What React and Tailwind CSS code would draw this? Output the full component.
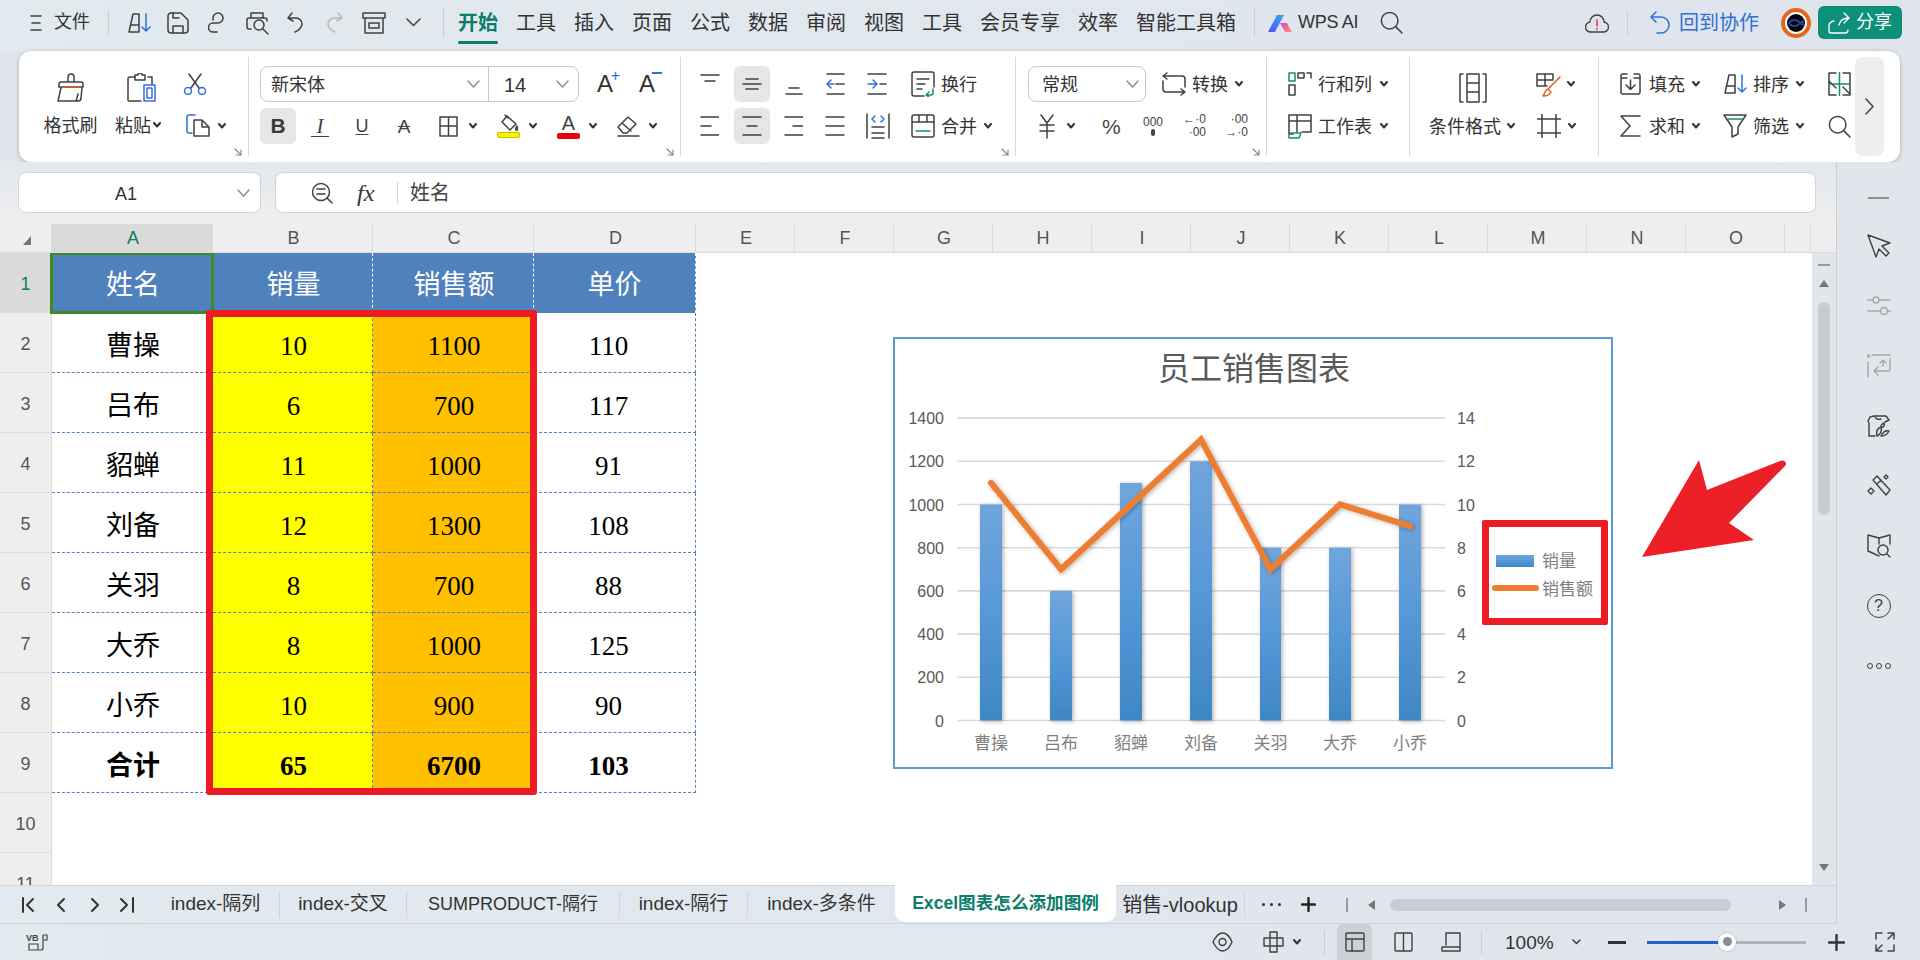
import React from 'react';

const S = ({ w, h, c = '', stroke = '#404040', sw = 1.5, children }) => (
  <svg width={w} height={h} viewBox={`0 0 ${w} ${h}`} fill="none" stroke={stroke} strokeWidth={sw} strokeLinecap="round" strokeLinejoin="round" className={`shrink-0 ${c}`}>
    {children}
  </svg>
);

const BLUE = '#2f6fe0';
const GREEN = '#16905f';

// small dropdown carets
const Caret = ({ c = '' }) => (
  <S w={8} h={6} c={c} stroke="#333" sw={2}><path d="M1 1l3 3.5L7 1" /></S>
);
const Chev = ({ c = '' }) => (
  <S w={13} h={8} c={c} stroke="#8a8a8a" sw={1.4}><path d="M1 1l5.5 6L12 1" /></S>
);

const Launcher = () => (
  <div className="absolute right-[6px] top-[97px]">
    <S w={8} h={8} stroke="#8a8a8a" sw={1.2}><path d="M1 1l6 6M7 2v5H2" /></S>
  </div>
);

const Sep = () => <div className="w-px h-[99px] mt-[6px] bg-[#d9d9d9] shrink-0" />;
const Row = ({ children }) => <div className="flex items-center h-[36px]">{children}</div>;
const Rows = ({ children }) => <div className="flex flex-col gap-[6px] pt-[15px]">{children}</div>;
const Lbl = ({ c = '', children }) => <span className={`pt-[2px] text-[18px] leading-none text-[#333] whitespace-nowrap shrink-0 ${c}`}>{children}</span>;

const SortIcon = ({ c = '' }) => (
  <S w={25} h={22} c={c}>
    <path d="M2 20L6 2h6v18H2zM4 13h8" />
    <path d="M19 2v17M15 15l4 4 4-4" stroke={BLUE} />
  </S>
);
const SearchIcon = ({ c = '', s = 23 }) => (
  <S w={s} h={s} c={c}><circle cx={s * 0.42} cy={s * 0.42} r={s * 0.36} /><path d={`M${s * 0.68} ${s * 0.68}L${s - 1} ${s - 1}`} /></S>
);

const TopBar = () => (
  <div className="flex items-center h-[51px] pb-[6px] shrink-0 bg-gradient-to-r from-[#e1eaef] to-[#e0e4ec]">
    <S w={12} h={18} c="ml-[30px]"><path d="M1 2h10M2 9h8M1 16h10" /></S>
    <span className="ml-[12px] text-[18px] text-[#333]">文件</span>
    <div className="ml-[18px] w-px h-[25px] bg-[#c9ced3]" />
    <SortIcon c="ml-[18px]" />
    <S w={22} h={22} c="ml-[15px]">
      <path d="M4 1h10l7 7v10a3 3 0 01-3 3H4a3 3 0 01-3-3V4a3 3 0 013-3z" />
      <path d="M6 21v-7h10v7M6 1v5h6" />
    </S>
    <S w={19} h={22} c="ml-[19px]"><path d="M5 8V6a5 5 0 115 5H5a4 4 0 000 9h4" /></S>
    <S w={23} h={24} c="ml-[19px]">
      <path d="M5 7V2h12v5M5 18H3a2 2 0 01-2-2V9a2 2 0 012-2h16a2 2 0 012 2v1" />
      <circle cx="13" cy="14" r="5" /><path d="M17 18l5 5" />
    </S>
    <S w={16} h={21} c="ml-[18px]"><path d="M5 1L1 6l5 3M1 6h8a6 6 0 016 6c0 4-3 6-7 8" /></S>
    <S w={16} h={21} c="ml-[24px]" stroke="#b5b8bb"><path d="M11 1l4 5-5 3M15 6H7a6 6 0 00-6 6c0 4 3 6 7 8" /></S>
    <S w={24} h={24} c="ml-[19px]">
      <path d="M1 2h22v5H1zM3 7v15h18V7M7 12h10v5H7z" />
    </S>
    <S w={15} h={9} c="ml-[20px]" stroke="#444"><path d="M1 1l6.5 6.5L14 1" /></S>
    <div className="ml-[22px] w-px h-[29px] bg-[#c9ced3]" />
    <div className="ml-[14px] flex gap-[18px] text-[20px] leading-none text-[#333] whitespace-nowrap">
      <span className="relative font-bold text-[#0b7d6b]">
        开始
        <span className="absolute left-0 right-0 -bottom-[11px] h-[3px] rounded bg-[#0b7d6b]" />
      </span>
      <span>工具</span><span>插入</span><span>页面</span><span>公式</span><span>数据</span><span>审阅</span><span>视图</span><span>工具</span><span>会员专享</span><span>效率</span><span>智能工具箱</span>
    </div>
    <div className="ml-[18px] w-px h-[29px] bg-[#c9ced3]" />
    <svg width="24" height="18" viewBox="0 0 24 18" className="ml-[13px] shrink-0">
      <defs>
        <linearGradient id="wb" x1="0" y1="1" x2="1" y2="0"><stop offset="0" stopColor="#5b4df5" /><stop offset="1" stopColor="#2fa8ff" /></linearGradient>
        <linearGradient id="wp" x1="0" y1="0" x2="1" y2="1"><stop offset="0" stopColor="#e63bd5" /><stop offset="1" stopColor="#ff9a70" /></linearGradient>
      </defs>
      <path d="M0 18L9 1h7L7 18z" fill="url(#wb)" />
      <path d="M12 9h7l5 9h-7z" fill="url(#wp)" />
    </svg>
    <span className="ml-[6px] w-[61px] text-[18px] tracking-[-0.3px] text-[#333] whitespace-nowrap">WPS AI</span>
    <SearchIcon c="ml-[21px]" />
    <S w={24} h={20} c="ml-[182px]" sw={1.4}>
      <path d="M6 19a5 5 0 01-1-10 7 7 0 0114 0 5 5 0 01-1 10z" />
      <path d="M12 7v6M12 15.5v1" stroke="#e0264b" sw={2} />
    </S>
    <div className="ml-[18px] w-px h-[24px] bg-[#c9ced3]" />
    <S w={20} h={24} c="ml-[22px]" stroke={BLUE}><path d="M6 1L1 6l5 5M1 6h10a8 8 0 010 16H7" /></S>
    <span className="ml-[9px] text-[20px] text-[#2f6fd6] whitespace-nowrap">回到协作</span>
    <svg width="30" height="30" viewBox="0 0 30 30" className="ml-[22px] shrink-0">
      <circle cx="15" cy="15" r="13" fill="#fff" stroke="#e4661c" strokeWidth="4" />
      <circle cx="15" cy="15" r="9" fill="#050510" />
      <path d="M8 15c3-4 8-4 11 0l3-2v4l-3-2c-3 4-8 4-11 0z" fill="none" stroke="#2c4fb5" strokeWidth="1.3" />
    </svg>
    <div className="ml-[7px] w-[84px] h-[33px] rounded-[6px] bg-[#0d9079] flex items-center justify-center gap-[6px]">
      <S w={22} h={22} stroke="#fff" sw={1.3}><path d="M6 9a5 5 0 00-5 5v5a2 2 0 002 2h14a3 3 0 003-3M11 13c1-5 4-7 10-7M16 1l5 5-5 5" /></S>
      <span className="text-[18px] text-white whitespace-nowrap">分享</span>
    </div>
  </div>
);

const Clipboard = () => (
  <div className="relative w-[229px] h-full shrink-0">
    <div className="flex pt-[22px]">
      <div className="ml-[25px] w-[53px] flex flex-col items-center">
        <S w={28} h={29}>
          <path d="M11 9V4a3 3 0 016 0v5M4 9h20a2 2 0 012 2v3H2v-3a2 2 0 012-2z" />
          <path d="M5 14h18" stroke="#d9602a" sw={1.8} />
          <path d="M4 15L1 28h20c2 0 3-1 3-3l1-10M19 28c1-2 1-4 2-7" />
        </S>
        <Lbl c="mt-[13px]">格式刷</Lbl>
      </div>
      <div className="ml-[18px] w-[46px] flex flex-col">
        <S w={30} h={29} c="ml-[11px]">
          <path d="M8 4H4a2 2 0 00-2 2v21a1 1 0 001 1h12M22 4h4v7M9 7V2h3a2 2 0 014 0h3v5z" />
          <path d="M18 12h11v16H18zM21 15h5v10h-5z" stroke={BLUE} />
        </S>
        <div className="mt-[13px] flex items-center">
          <Lbl>粘贴</Lbl>
          <Caret c="ml-[2px]" />
        </div>
      </div>
      <div className="ml-[22px] flex flex-col">
        <S w={24} h={22}>
          <path d="M6 1l10 14M18 1L8 15" />
          <circle cx="5" cy="18" r="3.5" stroke={BLUE} /><circle cx="19" cy="18" r="3.5" stroke={BLUE} />
        </S>
        <div className="mt-[19px] ml-[3px] flex items-center">
          <S w={24} h={23}>
            <path d="M9 1H3a2 2 0 00-2 2v14a2 2 0 002 2h3" stroke={BLUE} />
            <path d="M8 6h8l7 7v9H8zM16 6v7h7" />
          </S>
          <Caret c="ml-[8px]" />
        </div>
      </div>
    </div>
    <Launcher />
  </div>
);

const FontGroup = () => (
  <div className="relative w-[431px] h-full shrink-0">
    <Rows>
      <Row>
        <div className="ml-[11px] w-[319px] h-[36px] flex rounded-[8px] border border-[#c8c8c8]">
          <div className="w-[228px] flex items-center justify-between pl-[10px] pr-[8px] border-r border-[#c8c8c8]">
            <Lbl>新宋体</Lbl><Chev />
          </div>
          <div className="flex-1 flex items-center justify-between pl-[15px] pr-[9px]">
            <Lbl c="text-[20px]">14</Lbl><Chev />
          </div>
        </div>
        <div className="ml-[18px] w-[21px] relative text-[24px] leading-none text-[#333]">
          A
          <span className="absolute -right-[2px] -top-[4px] text-[16px] leading-none text-[#2f6fe0]">+</span>
        </div>
        <div className="ml-[21px] w-[21px] relative text-[24px] leading-none text-[#333]">
          A
          <span className="absolute -right-[2px] top-0 w-[10px] h-[1.5px] bg-[#2f6fe0]" />
        </div>
      </Row>
      <Row>
        <div className="ml-[11px] w-[36px] h-[36px] rounded-[6px] bg-[#e6e6e6] flex items-center justify-center text-[21px] font-bold text-[#3a3a3a]">B</div>
        <span className="ml-[15px] w-[18px] text-center text-[21px] italic font-['Liberation_Serif',serif] border-b border-[#444] leading-[20px] text-[#444]">I</span>
        <span className="ml-[26px] w-[14px] text-center text-[18px] underline underline-offset-2 text-[#444] leading-none">U</span>
        <span className="ml-[25px] w-[20px] text-center text-[19px] line-through text-[#444] leading-none">A</span>
        <S w={19} h={23} c="ml-[25px]"><path d="M1 2h17v19H1zM9.5 2v19M1 11h17" /></S>
        <Caret c="ml-[11px]" />
        <div className="ml-[20px] w-[23px] flex flex-col items-center">
          <S w={20} h={18}><path d="M8 2l9 8-6 6-8-8zM6 1l3 3M18 12c-1 2-2 3-1 4s2 0 1-4z" /></S>
          <div className="w-[23px] h-[6px] rounded-[2px] bg-[#ffef00] border border-[#c9bc00]" />
        </div>
        <Caret c="ml-[9px]" />
        <div className="ml-[20px] w-[23px] flex flex-col items-center">
          <span className="text-[20px] leading-[18px] text-[#444]">A</span>
          <div className="w-[23px] h-[6px] mt-[1px] rounded-[2px] bg-[#e8000f]" />
        </div>
        <Caret c="ml-[9px]" />
        <S w={23} h={22} c="ml-[20px]"><path d="M1 12l10-10 8 7-9 9H6zM5 8l9 8M1 21h21" /></S>
        <Caret c="ml-[9px]" />
      </Row>
    </Rows>
    <Launcher />
  </div>
);

const AlignGroup = () => (
  <div className="relative w-[334px] h-full shrink-0">
    <Rows>
      <Row>
        <S w={20} h={24} c="ml-[19px]"><path d="M1 3h18M5 9h10" /></S>
        <div className="ml-[14px] w-[36px] h-[36px] rounded-[6px] bg-[#e6e6e6] flex items-center justify-center">
          <S w={20} h={14}><path d="M4 2h12M1 7h18M4 12h12" /></S>
        </div>
        <S w={18} h={24} c="ml-[15px]"><path d="M4 16h10M1 22h16" /></S>
        <S w={19} h={24} c="ml-[23px]">
          <path d="M1 2h17M10 12h8M1 22h17" />
          <path d="M8 12H1M5 8l-4 4 4 4" stroke={BLUE} />
        </S>
        <S w={20} h={24} c="ml-[22px]">
          <path d="M1 2h18M13 12h6M1 22h18" />
          <path d="M1 12h9M6 8l4 4-4 4" stroke={BLUE} />
        </S>
        <S w={24} h={26} c="ml-[24px]">
          <path d="M13 25H3a2 2 0 01-2-2V3a2 2 0 012-2h18a2 2 0 012 2v13M6 8h12M6 13h8M6 18h5" />
          <path d="M22 18v4a2 2 0 01-2 2h-5M18 21l-3 3 3 2" stroke={GREEN} />
        </S>
        <Lbl c="ml-[6px]">换行</Lbl>
      </Row>
      <Row>
        <S w={19} h={24} c="ml-[19px]"><path d="M1 3h18M1 12h10M1 21h18" /></S>
        <div className="ml-[15px] w-[36px] h-[36px] rounded-[6px] bg-[#e6e6e6] flex items-center justify-center">
          <S w={20} h={22}><path d="M1 2h18M5 11h10M1 20h18" /></S>
        </div>
        <S w={19} h={24} c="ml-[14px]"><path d="M1 3h18M9 12h10M1 21h18" /></S>
        <S w={20} h={24} c="ml-[22px]"><path d="M1 3h18M1 12h18M1 21h18" /></S>
        <S w={24} h={26} c="ml-[21px]">
          <path d="M1 1v24M23 1v24M6 14h12M6 20h12M6 25h12" />
          <path d="M9 3L6 6l3 3M15 3l3 3-3 3" stroke={BLUE} />
        </S>
        <S w={24} h={24} c="ml-[21px]">
          <path d="M1 3a2 2 0 012-2h18a2 2 0 012 2v18a2 2 0 01-2 2H3a2 2 0 01-2-2zM1 8h22M8 1v7M16 1v7" />
          <path d="M5 17h14" stroke={GREEN} />
        </S>
        <Lbl c="ml-[6px]">合并</Lbl>
        <Caret c="ml-[7px]" />
      </Row>
    </Rows>
    <Launcher />
  </div>
);

const NumberGroup = () => (
  <div className="relative w-[250px] h-full shrink-0">
    <Rows>
      <Row>
        <div className="ml-[12px] w-[118px] h-[36px] rounded-[8px] border border-[#c8c8c8] flex items-center justify-between pl-[13px] pr-[6px]">
          <Lbl>常规</Lbl><Chev />
        </div>
        <S w={24} h={24} c="ml-[16px]">
          <path d="M5 1L1 4l4 3M1 4h19a3 3 0 013 3v8M19 23l4-3-4-3M23 20H4a3 3 0 01-3-3V9" />
        </S>
        <Lbl c="ml-[6px]">转换</Lbl>
        <Caret c="ml-[7px]" />
      </Row>
      <Row>
        <S w={16} h={25} c="ml-[23px]"><path d="M2 1l6 8 6-8M8 9v15M1 11h14M1 17h14" /></S>
        <Caret c="ml-[12px]" />
        <span className="ml-[27px] w-[18px] text-center text-[21px] leading-none text-[#444]">%</span>
        <div className="ml-[22px] w-[22px] flex flex-col items-center text-[#444]">
          <span className="text-[12px] leading-[12px]">000</span>
          <span className="w-[4px] h-[7px] mt-[1px] rounded-full bg-[#444]" />
        </div>
        <div className="ml-[21px] w-[21px] flex flex-col items-end text-[12px] leading-[13px] text-[#444]">
          <span>←·0</span><span>·00</span>
        </div>
        <div className="ml-[20px] w-[22px] flex flex-col items-end text-[12px] leading-[13px] text-[#444]">
          <span>·00</span><span>→·0</span>
        </div>
      </Row>
    </Rows>
    <Launcher />
  </div>
);

const RowColGroup = () => (
  <div className="w-[142px] h-full shrink-0">
    <Rows>
      <Row>
        <S w={24} h={26} c="ml-[21px]">
          <path d="M1 2h6v8H1z" stroke={GREEN} />
          <path d="M10 2h6v5h-6zM19 2h4v5M1 14h6v10H1z" />
        </S>
        <Lbl c="ml-[6px]">行和列</Lbl>
        <Caret c="ml-[8px]" />
      </Row>
      <Row>
        <S w={24} h={26} c="ml-[21px]">
          <path d="M5 21H1V2h22v17H14M1 8h22M9 2v17M9 8v11" />
          <path d="M1 20h12l-2 5H1z" stroke={GREEN} />
        </S>
        <Lbl c="ml-[6px]">工作表</Lbl>
        <Caret c="ml-[8px]" />
      </Row>
    </Rows>
  </div>
);

const StyleGroup = () => (
  <div className="w-[188px] h-full shrink-0">
    <Rows>
      <Row>
        <S w={30} h={30} c="ml-[48px] mt-[8px]">
          <path d="M5 1H2v28h3M25 1h3v28h-3M9 1h12v28H9zM9 10h12M9 19h12M21 10v9" />
        </S>
        <S w={25} h={24} c="ml-[48px] mt-[2px]">
          <path d="M11 13H1V1h16v5M9 1v12M1 7h16" />
          <path d="M24 4L12 16M12 16c-3 1-3 4-5 7 4 0 7-2 8-4z" stroke="#d9602a" />
        </S>
        <Caret c="ml-[6px]" />
      </Row>
      <Row>
        <Lbl c="ml-[19px]">条件格式</Lbl>
        <Caret c="ml-[6px]" />
        <S w={24} h={24} c="ml-[22px]"><path d="M5 0v24M19 0v24M0 5h24M0 19h24" /></S>
        <Caret c="ml-[7px]" />
      </Row>
    </Rows>
  </div>
);

const EditGroup = () => (
  <div className="w-[256px] h-full shrink-0">
    <Rows>
      <Row>
        <S w={21} h={22} c="ml-[21px]"><path d="M7 1H3a2 2 0 00-2 2v16a2 2 0 002 2h15a2 2 0 002-2V3a2 2 0 00-2-2h-4M1 5h6M14 5h6M10.5 7v9M6 12l4.5 4.5L15 12" /></S>
        <Lbl c="ml-[8px]">填充</Lbl>
        <Caret c="ml-[7px]" />
        <SortIcon c="ml-[23px]" />
        <Lbl c="ml-[5px]">排序</Lbl>
        <Caret c="ml-[7px]" />
        <S w={23} h={24} c="ml-[24px]">
          <path d="M8 1H1v22h7M15 1h7v22h-7M1 9l7 7M15 15l7 7" />
          <path d="M11.5 0v24M0 12h23" stroke={GREEN} />
        </S>
      </Row>
      <Row>
        <S w={21} h={24} c="ml-[21px]"><path d="M20 2H1l9 10-9 10h19" /></S>
        <Lbl c="ml-[8px]">求和</Lbl>
        <Caret c="ml-[7px]" />
        <S w={24} h={24} c="ml-[23px]">
          <path d="M1 1h22l-8 12v7l-6 3V13z" />
          <path d="M5 5h14" stroke={GREEN} />
        </S>
        <Lbl c="ml-[6px]">筛选</Lbl>
        <Caret c="ml-[7px]" />
        <SearchIcon c="ml-[24px]" />
      </Row>
    </Rows>
  </div>
);

const Ribbon = () => (
  <div className="flex h-[111px] w-[1881px] ml-[19px] shrink-0 rounded-[12px] bg-white shadow-[0_1px_4px_rgba(0,0,0,0.25)]">
    <Clipboard /><Sep />
    <FontGroup /><Sep />
    <AlignGroup /><Sep />
    <NumberGroup /><Sep />
    <RowColGroup /><Sep />
    <StyleGroup /><Sep />
    <EditGroup />
    <div className="w-[29px] h-[99px] mt-[6px] rounded-[8px] bg-[#eeeeee] flex items-center justify-center">
      <S w={9} h={17} stroke="#444"><path d="M1 1l7 7.5L1 16" /></S>
    </div>
  </div>
);

const FormulaBar = () => (
  <div className="flex items-start h-[62px] pt-[10px] pl-[18px] bg-gradient-to-b from-[#e3e8ed] to-[#eeeeee]">
    <div className="relative w-[243px] h-[41px] pr-[27px] pt-[3px] rounded-[8px] bg-white border border-[#d0d4d9] flex items-center justify-center">
      <span className="text-[18px] text-[#333]">A1</span>
      <Chev c="absolute right-[10px] top-[16px]" />
    </div>
    <div className="ml-[14px] w-[1541px] h-[41px] rounded-[8px] bg-white border border-[#d0d4d9] flex items-center">
      <S w={22} h={22} c="ml-[35px]"><circle cx="10" cy="10" r="8.5" /><path d="M6 7h8M6 12h8M16 16l5 5" /></S>
      <span className="ml-[24px] w-[22px] text-[24px] leading-none italic font-['Liberation_Serif',serif] text-[#333]">fx</span>
      <div className="ml-[18px] w-px h-[22px] bg-[#d0d4d9]" />
      <span className="ml-[12px] text-[20px] text-[#444] leading-none">姓名</span>
    </div>
  </div>
);

const columns = ['A', 'B', 'C', 'D', 'E', 'F', 'G', 'H', 'I', 'J', 'K', 'L', 'M', 'N', 'O', ''];

const ColHeader = () => (
  <div className="grid grid-cols-[52px_161px_160px_161px_162px_repeat(11,99px)_26px_24px] h-[29px] bg-[#eeeeee] border-b border-[#dcdcdc] text-[18px] text-[#555] leading-none">
    <div className="flex items-center justify-center border-r border-[#dcdcdc]">
      <div className="w-0 h-0 ml-[2px] mt-[4px] border-l-[8px] border-l-transparent border-b-[9px] border-b-[#777]" />
    </div>
    {columns.map((col, i) => (
      <div key={i} className={`flex items-center justify-center pl-[2px] border-r border-[#dcdcdc] ${i === 0 ? 'bg-[#dadada] text-[#0b7d6b]' : ''}`}>{col}</div>
    ))}
    <div />
  </div>
);

const tableData = [
  ['曹操', '10', '1100', '110'],
  ['吕布', '6', '700', '117'],
  ['貂蝉', '11', '1000', '91'],
  ['刘备', '12', '1300', '108'],
  ['关羽', '8', '700', '88'],
  ['大乔', '8', '1000', '125'],
  ['小乔', '10', '900', '90'],
];

const RowHead = ({ active, children }) => (
  <div className={`flex items-center justify-center pt-[3px] border-b border-r border-[#dcdcdc] text-[18px] leading-none ${active ? 'bg-[#dadada] text-[#0b7d6b]' : 'bg-[#eeeeee] text-[#555]'}`}>
    {children}
  </div>
);

const cellFont = "pt-[7px] text-[27px] leading-none text-black flex items-center justify-center border-b border-r border-dashed border-[#4f81bd] font-['Liberation_Serif','Noto_Sans_CJK_SC',serif]";

const DataRow = ({ num, row, bold }) => (
  <div className="grid grid-cols-[52px_161px_160px_161px_162px_1fr] h-[60px]">
    <RowHead>{num}</RowHead>
    <div className={`${cellFont} pl-[2px] ${bold ? 'font-bold' : ''}`}>{row[0]}</div>
    <div className={`${cellFont} pl-[2px] bg-[#ffff00] ${bold ? 'font-bold' : ''}`}>{row[1]}</div>
    <div className={`${cellFont} pl-[2px] bg-[#ffc000] ${bold ? 'font-bold' : ''}`}>{row[2]}</div>
    <div className={`${cellFont} pr-[12px] ${bold ? 'font-bold' : ''}`}>{row[3]}</div>
  </div>
);

const headerCell = "pt-[5px] text-[27px] leading-none text-white flex items-center justify-center bg-[#4f81bd] border-r border-dashed border-white font-['Liberation_Serif','Noto_Sans_CJK_SC',serif]";

const bars = [
  { x: 980, w: 22, v: 1000, name: '曹操' },
  { x: 1050, w: 22, v: 600, name: '吕布' },
  { x: 1120, w: 22, v: 1100, name: '貂蝉' },
  { x: 1190, w: 22, v: 1200, name: '刘备' },
  { x: 1260, w: 21, v: 800, name: '关羽' },
  { x: 1329, w: 22, v: 800, name: '大乔' },
  { x: 1399, w: 22, v: 1000, name: '小乔' },
];
const lineVals = [11, 7, 10, 13, 7, 10, 9];
const y0 = 720.5;
const yPer = 0.216;

const Chart = () => {
  const pts = bars.map((b, i) => `${b.x + b.w / 2},${y0 - lineVals[i] * 21.6}`).join(' ');
  return (
    <div className="absolute left-[893px] top-[84px] w-[720px] h-[432px] border-2 border-[#5b9bd5] bg-white font-['Liberation_Sans','Noto_Sans_CJK_SC',sans-serif]">
      <svg width="716" height="428" viewBox="895 339 716 428">
        <defs>
          <linearGradient id="bar" x1="0" y1="0" x2="0" y2="1">
            <stop offset="0" stopColor="#71a5dc" /><stop offset="0.5" stopColor="#5598d8" /><stop offset="1" stopColor="#3f86c5" />
          </linearGradient>
          <filter id="sh" x="-30%" y="-10%" width="160%" height="120%">
            <feDropShadow dx="1.5" dy="1" stdDeviation="2" floodColor="#000" floodOpacity="0.3" />
          </filter>
        </defs>
        <text x="1254" y="380" textAnchor="middle" fontSize="32" fill="#595959">员工销售图表</text>
        {[0, 1, 2, 3, 4, 5, 6, 7].map(i => {
          const y = y0 - i * 43.2;
          return (
            <g key={i}>
              <line x1="957" x2="1445" y1={y} y2={y} stroke="#d9d9d9" strokeWidth="1.6" />
              <text x="944" y={y + 6} textAnchor="end" fontSize="16" fill="#595959">{i * 200}</text>
              <text x="1457" y={y + 6} fontSize="16" fill="#595959">{i * 2}</text>
            </g>
          );
        })}
        <g filter="url(#sh)">
          {bars.map(b => (
            <rect key={b.x} x={b.x} y={y0 - b.v * yPer} width={b.w} height={b.v * yPer} fill="url(#bar)" />
          ))}
        </g>
        <polyline points={pts} fill="none" stroke="#ed7d31" strokeWidth="6" strokeLinejoin="miter" strokeLinecap="round" filter="url(#sh)" />
        {bars.map(b => (
          <text key={b.name} x={b.x + b.w / 2} y="749" textAnchor="middle" fontSize="17" fill="#7f7f7f">{b.name}</text>
        ))}
        <rect x="1496" y="555" width="38" height="12" fill="url(#bar)" />
        <text x="1542" y="567" fontSize="17" fill="#7f7f7f">销量</text>
        <line x1="1495" x2="1536" y1="588" y2="588" stroke="#ed7d31" strokeWidth="6" strokeLinecap="round" />
        <text x="1542" y="595" fontSize="17" fill="#7f7f7f">销售额</text>
      </svg>
    </div>
  );
};

const Sheet = () => (
  <div className="relative flex-1 min-h-0 overflow-hidden bg-white">
    <div className="grid grid-cols-[52px_161px_160px_161px_162px_1fr] h-[60px]">
      <RowHead active>1</RowHead>
      <div className={`${headerCell} pl-[2px] relative`}>
        姓名
        <div className="absolute -left-[2px] -top-[1px] w-[164px] h-[62px] border-[3px] border-[#3f8a22]" />
      </div>
      <div className={`${headerCell} pl-[2px]`}>销量</div>
      <div className={`${headerCell} pl-[2px]`}>销售额</div>
      <div className={`${headerCell} border-[#4f81bd]`}>单价</div>
    </div>
    {tableData.map((row, i) => <DataRow key={row[0]} num={i + 2} row={row} />)}
    <DataRow num={9} row={['合计', '65', '6700', '103']} bold />
    {[10, 11].map(n => (
      <div key={n} className="grid grid-cols-[52px_1fr] h-[60px]">
        <RowHead>{n}</RowHead>
        <div />
      </div>
    ))}
    {/* red annotations sit over the sheet */}
    <div className="absolute left-[206px] top-[57px] w-[331px] h-[485px] border-[7px] border-[#ed1c24] rounded-[3px]" />
    <Chart />
    <div className="absolute left-[1482px] top-[267px] w-[126px] h-[105px] border-[7px] border-[#ed1c24] rounded-[2px]" />
    <svg width="150" height="110" viewBox="1640 455 150 110" className="absolute left-[1640px] top-[202px]">
      <path d="M1642 557L1699 460l8 30 73-29c4-2 8 2 5 5l-56 57 25 17z" fill="#ed1f27" />
    </svg>
  </div>
);

const VScroll = () => (
  <div className="w-[24px] flex flex-col items-center bg-[#e1e5ec]">
    <div className="mt-[11px] w-[12px] h-[2px] bg-[#9a9a9a]" />
    <div className="mt-[14px] w-0 h-0 border-l-[5px] border-r-[5px] border-b-[7px] border-l-transparent border-r-transparent border-b-[#777]" />
    <div className="mt-[15px] w-[12px] h-[213px] rounded-full bg-[#c9cdd3]" />
    <div className="mt-auto mb-[14px] w-0 h-0 border-l-[5px] border-r-[5px] border-t-[7px] border-l-transparent border-r-transparent border-t-[#777]" />
  </div>
);

const sheetTabs = [
  { name: 'index-隔列', w: 'w-[128px]', f: 'text-[19px]' },
  { name: 'index-交叉', w: 'w-[127px]', f: 'text-[19px]' },
  { name: 'SUMPRODUCT-隔行', w: 'w-[213px]', f: 'text-[18px]' },
  { name: 'index-隔行', w: 'w-[128px]', f: 'text-[19px]' },
];

const TabBar = () => (
  <div className="flex items-center h-[39px] shrink-0 border-t border-b border-[#cfd4d9] bg-gradient-to-r from-[#e1eaef] to-[#e0e4ec]">
    <S w={14} h={16} c="ml-[21px]" stroke="#333" sw={2}><path d="M2 1v14M12 2L6 8l6 6" /></S>
    <S w={10} h={16} c="ml-[21px]" stroke="#333" sw={2}><path d="M8 2L2 8l6 6" /></S>
    <S w={10} h={16} c="ml-[24px]" stroke="#333" sw={2}><path d="M2 2l6 6-6 6" /></S>
    <S w={16} h={16} c="ml-[19px]" stroke="#333" sw={2}><path d="M2 2l6 6-6 6M14 1v14" /></S>
    <div className="w-[17px] shrink-0" />
    {sheetTabs.map(t => (
      <div key={t.name} className={`${t.w} ${t.f} h-[27px] flex items-center justify-center border-r border-[#cfd4d9] text-[#333] whitespace-nowrap`}>{t.name}</div>
    ))}
    <div className="w-[147px] flex items-center justify-center text-[19px] text-[#333] whitespace-nowrap">index-多条件</div>
    <div className="w-[221px] h-[37px] self-start -mt-px flex items-center justify-center rounded-b-[10px] bg-white text-[17.6px] font-bold text-[#0b7d6b] whitespace-nowrap">Excel图表怎么添加图例</div>
    <div className="w-[129px] h-[27px] flex items-center justify-center border-r border-[#cfd4d9] text-[20px] text-[#333] whitespace-nowrap">销售-vlookup</div>
    <div className="ml-[17px] flex gap-[5px]">
      <span className="w-[3px] h-[3px] rounded-full bg-[#333]" /><span className="w-[3px] h-[3px] rounded-full bg-[#333]" /><span className="w-[3px] h-[3px] rounded-full bg-[#333]" />
    </div>
    <S w={15} h={15} c="ml-[20px]" stroke="#222" sw={2.4}><path d="M7.5 1v13M1 7.5h13" /></S>
    <div className="ml-[30px] w-[2px] h-[14px] bg-[#9a9a9a]" />
    <div className="ml-[20px] w-0 h-0 border-t-[5px] border-b-[5px] border-r-[7px] border-t-transparent border-b-transparent border-r-[#777]" />
    <div className="ml-[15px] w-[341px] h-[12px] rounded-full bg-[#c9cdd3]" />
    <div className="ml-[48px] w-0 h-0 border-t-[5px] border-b-[5px] border-l-[7px] border-t-transparent border-b-transparent border-l-[#777]" />
    <div className="ml-[19px] w-[2px] h-[14px] bg-[#9a9a9a]" />
  </div>
);

const Sidebar = () => (
  <div className="w-[84px] flex flex-col items-center pt-[35px] border-l border-[#c9ced3] bg-[#e1e5ec]">
    <div className="w-[21px] h-[2px] bg-[#8f8f8f] mb-[17px]" />
    <div className="h-[60px] flex items-center">
      <S w={24} h={24} sw={1.4}><path d="M1 1l22 8-8 3 7 7-3 3-7-7-3 8z" /></S>
    </div>
    <div className="h-[60px] flex items-center">
      <S w={24} h={20} stroke="#a5a8ab" sw={1.4}><path d="M1 4h5M12 4h11M1 15h13M21 15h2" /><circle cx="9" cy="4" r="3" /><circle cx="17" cy="15" r="3.5" /></S>
    </div>
    <div className="h-[60px] flex items-center">
      <S w={24} h={24} stroke="#a5a8ab" sw={1.4}><path d="M5 1h18M1 8v15M23 5v10a2 2 0 01-2 2H7M11 13l-4 4 4 4M19 9l-3-3-3 3M16 6v6" /><circle cx="1.5" cy="2" r="1" /></S>
    </div>
    <div className="h-[60px] flex items-center">
      <S w={24} h={22} sw={1.4}><path d="M8 21H2V8L1 6l2-4 4-1h12l3 4-4 2M8 1c0 3 3 4 6 3M10 21c-1-5 1-8 4-9 1 4 0 7-4 9zM14 21c3 0 6-1 8-5-3-1-6 1-8 5zM14 13c-1-2 1-4 3-5 1 2 0 4-3 5z" /></S>
    </div>
    <div className="h-[60px] flex items-center">
      <S w={24} h={24} sw={1.4}><path d="M6 6l4-4 13 14-4 5zM10 10l4-4M19 1l2 2-2 2-2-2zM4 14l3 3-3 3-3-3z" /></S>
    </div>
    <div className="h-[60px] flex items-center">
      <S w={24} h={24} sw={1.4}><path d="M12 4L1 1v16l11 5M12 4l11-3v9M12 4v6" /><circle cx="16" cy="16" r="5" /><path d="M20 20l3 3" /></S>
    </div>
    <div className="h-[60px] flex items-center">
      <div className="w-[24px] h-[24px] rounded-full border-[1.5px] border-[#404040] flex items-center justify-center text-[16px] leading-none text-[#404040]">?</div>
    </div>
    <div className="h-[60px] flex items-center gap-[3px]">
      <span className="w-[6px] h-[6px] rounded-full border-[1.5px] border-[#404040]" />
      <span className="w-[6px] h-[6px] rounded-full border-[1.5px] border-[#404040]" />
      <span className="w-[6px] h-[6px] rounded-full border-[1.5px] border-[#404040]" />
    </div>
  </div>
);

const StatusBar = () => (
  <div className="flex items-center h-[36px] shrink-0 pr-[25px] bg-gradient-to-r from-[#e1eaef] to-[#e0e4ec]">
    <svg width="22" height="18" viewBox="0 0 22 18" className="ml-[26px] shrink-0" fill="none" stroke="#444" strokeWidth="1.2">
      <text x="0" y="8" fontSize="9" fontWeight="700" fill="#444" stroke="none">VB</text>
      <path d="M17 2h4v5h-4M17 2v13a2 2 0 01-2 2H3v-6h9v6" />
    </svg>
    <div className="flex-1" />
    <S w={21} h={20} sw={1.4}><path d="M1 10C4 4 7 1 10.5 1S17.500 4 20 10c-2.500 6-6 9-9.500 9S4 16 1 10z" /><circle cx="10.500" cy="10" r="3.500" /></S>
    <S w={21} h={24} c="ml-[30px]" sw={1.4}><path d="M7 8V2h7v6M7 16v6h7v-6M7 8H1v8h6M14 8h6v8h-6M7 8h7v8H7z" /></S>
    <Caret c="ml-[9px]" />
    <div className="ml-[23px] w-px h-[24px] bg-[#c9ced3]" />
    <div className="ml-[12px] w-[35px] h-[36px] rounded-t-[6px] bg-[#cdd1d6] flex items-center justify-center">
      <S w={20} h={20} sw={1.4}><path d="M1 2a1 1 0 011-1h16a1 1 0 011 1v16a1 1 0 01-1 1H2a1 1 0 01-1-1zM1 7h18M7 7v12" /></S>
    </div>
    <S w={19} h={20} c="ml-[22px]" sw={1.4}><path d="M1 2a1 1 0 011-1h15a1 1 0 011 1v16a1 1 0 01-1 1H2a1 1 0 01-1-1zM9.500 1v18" /></S>
    <S w={20} h={20} c="ml-[28px]" sw={1.4}><path d="M5 13V1h14v18H1v-4h18" /></S>
    <div className="ml-[20px] w-px h-[24px] bg-[#c9ced3]" />
    <span className="ml-[23px] w-[49px] text-[19px] leading-none text-[#333] whitespace-nowrap">100%</span>
    <S w={9} h={6} c="ml-[18px]" stroke="#444" sw={1.6}><path d="M1 1l3.500 3.500L8 1" /></S>
    <div className="ml-[27px] w-[18px] h-[3px] bg-[#333]" />
    <div className="relative ml-[21px] w-[159px] h-[3px] bg-[#b0b3b7]">
      <div className="w-[72px] h-[3px] bg-[#1f63d0]" />
      <div className="absolute left-[71px] -top-[8px] w-[18px] h-[18px] rounded-full bg-white shadow-[0_0_2px_rgba(0,0,0,0.3)] flex items-center justify-center">
        <div className="w-[9px] h-[9px] rounded-full bg-[#8c8c8c]" />
      </div>
    </div>
    <S w={17} h={17} c="ml-[22px]" stroke="#333" sw={2.4}><path d="M8.500 1v15M1 8.500h15" /></S>
    <S w={20} h={20} c="ml-[30px]" stroke="#444"><path d="M7 1H1v6M13 1h6v6M1 13v6h6M19 13v6h-6M13 7l6-6M7 13l-6 6" /></S>
  </div>
);

export default function App() {
  return (
    <div className="w-[1920px] h-[960px] overflow-hidden flex flex-col bg-[#e1e5ec] font-['Liberation_Sans','Noto_Sans_CJK_SC',sans-serif]">
      <TopBar />
      <Ribbon />
      <div className="flex flex-1 min-h-0">
        <div className="w-[1836px] flex flex-col">
          <FormulaBar />
          <ColHeader />
          <div className="flex flex-1 min-h-0">
            <Sheet />
            <VScroll />
          </div>
          <TabBar />
        </div>
        <Sidebar />
      </div>
      <StatusBar />
    </div>
  );
}
